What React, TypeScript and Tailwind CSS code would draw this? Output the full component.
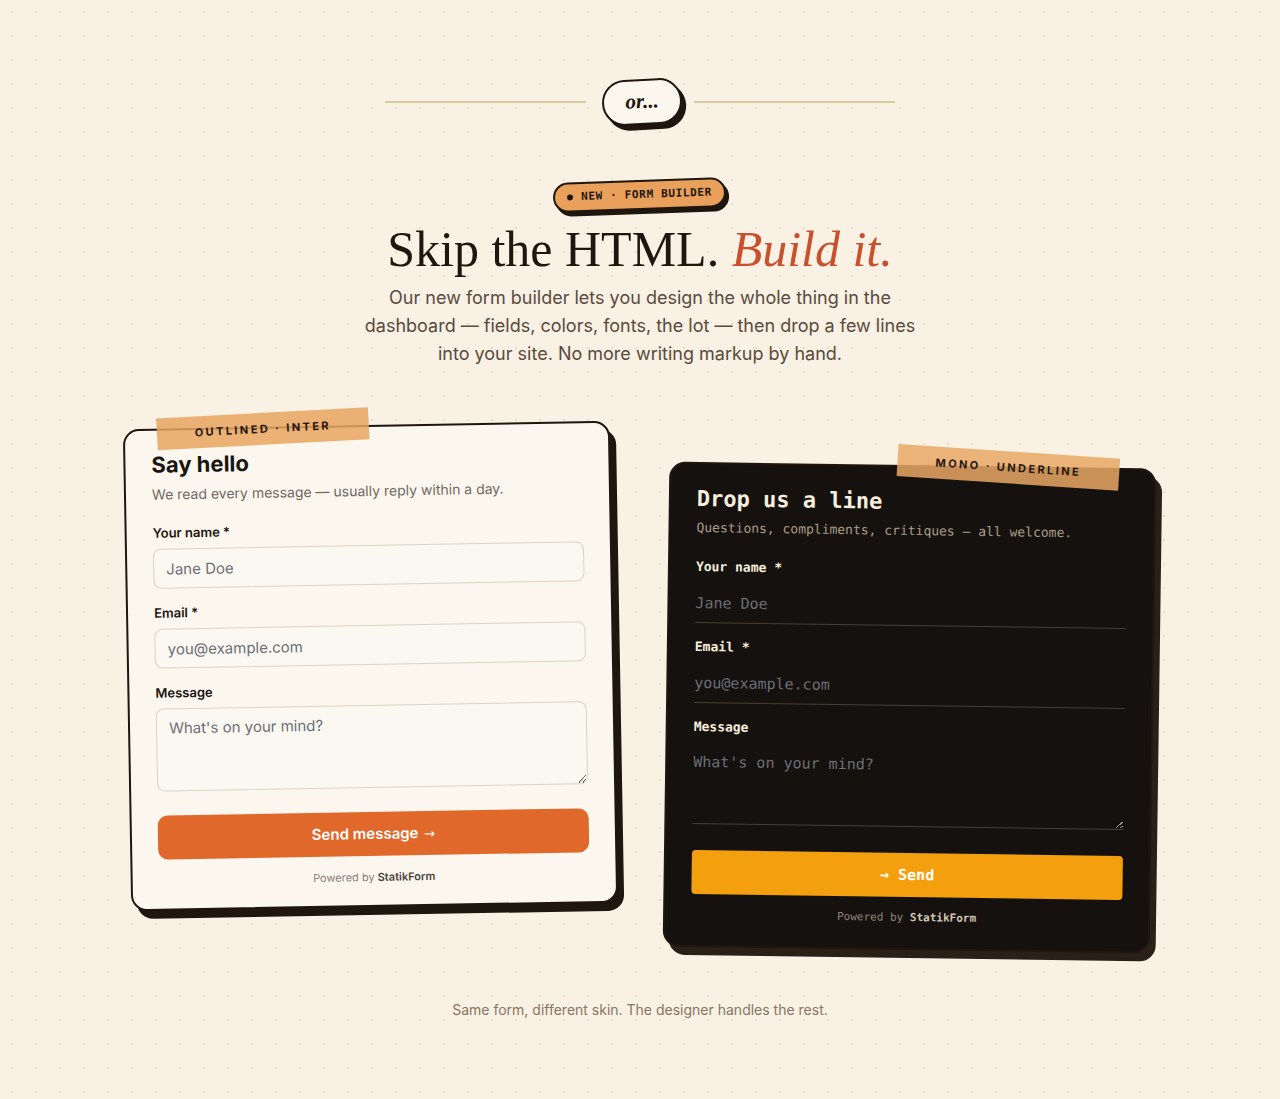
import React from 'react';

const sans = { fontFamily: 'Inter, "Noto Sans", sans-serif' };
const mono = { fontFamily: '"DejaVu Sans Mono", "Liberation Mono", monospace' };
const serif = { fontFamily: '"Liberation Serif", "DejaVu Serif", serif' };

const OutlinedForm: React.FC = () => (
  <div className="relative rotate-[-1deg] rounded-2xl border-2 border-[#1f1610] bg-[#fbf7ef] px-[26px] pb-5 pt-5 shadow-[6px_8px_0_#1f1610]" style={sans}>
    <div className="absolute left-[32px] top-[-16px] flex h-[32px] w-[212px] rotate-[-2deg] items-center justify-center bg-[#e9a55f]/85">
      <span className="text-[11px] font-bold tracking-[0.22em] text-[#1f1610]">OUTLINED · INTER</span>
    </div>
    <h2 className="text-[22px] font-bold leading-7 text-[#1a1510]">Say hello</h2>
    <p className="mt-1.5 text-[14px] leading-5 text-[#6f6862]">We read every message — usually reply within a day.</p>

    <label className="mt-5 block text-[13px] font-semibold leading-4 text-[#1a1510]">Your name *</label>
    <input
      className="mt-2 h-10 w-full rounded-lg border border-[#d8d2c7] bg-[#fbf8f1] px-3 text-[15px] outline-none placeholder:text-[#6b6f78]"
      placeholder="Jane Doe"
    />

    <label className="mt-4 block text-[13px] font-semibold leading-4 text-[#1a1510]">Email *</label>
    <input
      className="mt-2 h-10 w-full rounded-lg border border-[#d8d2c7] bg-[#fbf8f1] px-3 text-[15px] outline-none placeholder:text-[#6b6f78]"
      placeholder="you@example.com"
    />

    <label className="mt-4 block text-[13px] font-semibold leading-4 text-[#1a1510]">Message</label>
    <textarea
      className="mt-2 block h-[83px] w-full rounded-lg border border-[#d8d2c7] bg-[#fbf8f1] px-3 pt-2 text-[15px] leading-[22px] outline-none placeholder:text-[#6b6f78]"
      placeholder="What's on your mind?"
    />

    <button className="mt-6 h-[44px] w-full rounded-[10px] bg-[#e0682b] text-[15px] font-semibold text-white">
      Send message <span className="ml-0.5 text-[13px] font-normal" style={{ fontFamily: '"DejaVu Sans", sans-serif' }}>→</span>
    </button>
    <p className="mt-[13px] text-center text-[11px] leading-4 text-[#8a8178]">
      Powered by <span className="font-semibold text-[#4a423a]">StatikForm</span>
    </p>
  </div>
);

const MonoForm: React.FC = () => (
  <div className="relative mt-10 rotate-[0.8deg] rounded-2xl border-2 border-[#1f1610] bg-[#15110e] px-[26px] pb-[22px] pt-[21px] shadow-[6px_8px_0_#2a2018]" style={mono}>
    <div className="absolute right-[35px] top-[-17px] flex h-[32px] w-[222px] rotate-[3deg] items-center justify-center bg-[#e9a864]/85" style={sans}>
      <span className="text-[11px] font-bold tracking-[0.22em] text-[#1f1610]">MONO · UNDERLINE</span>
    </div>
    <h2 className="text-[22px] font-bold leading-7 text-[#f7eedc]">Drop us a line</h2>
    <p className="mt-[5px] text-[13px] leading-5 text-[#a99c87]">Questions, compliments, critiques — all welcome.</p>

    <label className="mt-[21px] block text-[13px] font-bold leading-4 text-[#f7eedc]">Your name *</label>
    <input
      className="mt-2 h-10 w-full border-b border-[#46403a] bg-transparent text-[15px] text-[#f7eedc] outline-none placeholder:text-[#6a6e76]"
      style={mono}
      placeholder="Jane Doe"
    />

    <label className="mt-4 block text-[13px] font-bold leading-4 text-[#f7eedc]">Email *</label>
    <input
      className="mt-2 h-10 w-full border-b border-[#46403a] bg-transparent text-[15px] text-[#f7eedc] outline-none placeholder:text-[#6a6e76]"
      style={mono}
      placeholder="you@example.com"
    />

    <label className="mt-4 block text-[13px] font-bold leading-4 text-[#f7eedc]">Message</label>
    <textarea
      className="mt-2 block h-[81px] w-full border-b border-[#46403a] bg-transparent pt-2 text-[15px] leading-[22px] text-[#f7eedc] outline-none placeholder:text-[#6a6e76]"
      style={mono}
      placeholder="What's on your mind?"
    />

    <button className="mt-[26px] h-[44px] w-full rounded-[4px] bg-[#f4a00e] text-[15px] font-bold text-white" style={mono}>
      → Send
    </button>
    <p className="mt-[13px] text-center text-[11px] leading-4 text-[#8f8576]">
      Powered by <span className="font-bold text-[#cfc5b4]">StatikForm</span>
    </p>
  </div>
);

export default function App() {
  return (
    <div
      className="min-h-screen bg-[#f8f1e4] bg-[radial-gradient(circle,#e6dccb_1.2px,transparent_1.4px)] bg-[size:24px_24px] pb-16 pt-[79px]"
      style={sans}
    >
      <div className="flex items-center justify-center">
        <div className="h-[2px] w-[201px] bg-[#d9cba1]" />
        <div className="ml-4 mr-3 flex h-[46px] w-[80px] rotate-[-3deg] items-center justify-center rounded-full border-2 border-[#1f1610] bg-[#fbf7ee] shadow-[4px_5px_0_#1f1610]">
          <span className="text-[21px] font-bold italic text-[#1f1610]" style={serif}>or...</span>
        </div>
        <div className="h-[2px] w-[201px] bg-[#d9cba1]" />
      </div>

      <div className="mt-[55px] flex justify-center">
        <div className="flex h-[30px] rotate-[-2deg] items-center gap-2 rounded-full border-2 border-[#1f1610] bg-[#e8a05a] px-3 shadow-[3px_4px_0_#1f1610]" style={mono}>
          <span className="h-[6px] w-[6px] rounded-full bg-[#1f1610]" />
          <span className="text-[11px] font-bold tracking-[0.06em] text-[#1f1610]">NEW · FORM BUILDER</span>
        </div>
      </div>

      <h1 className="mt-3 text-center text-[50px] leading-[1.1] text-[#1f1610]" style={serif}>
        Skip the HTML. <span className="italic text-[#c9502c]">Build it.</span>
      </h1>
      <p className="mx-auto mt-[7px] max-w-[570px] text-center text-[18px] leading-7 text-[#5a4a3c]">
        Our new form builder lets you design the whole thing in the dashboard — fields, colors, fonts, the lot — then drop a few lines into your site. No more writing markup by hand.
      </p>

      <div className="mx-auto mt-[57px] grid w-[1026px] grid-cols-2 items-start gap-[52px]">
        <OutlinedForm />
        <MonoForm />
      </div>

      <p className="mt-[49px] text-center text-[14px] text-[#8a7560]">
        Same form, different skin. The designer handles the rest.
      </p>
    </div>
  );
}
